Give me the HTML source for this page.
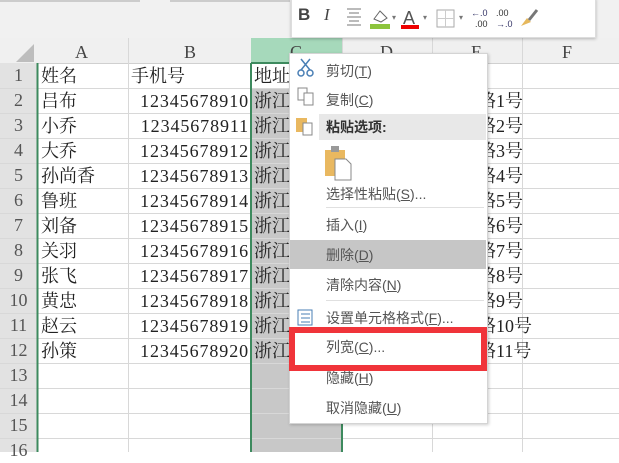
<!DOCTYPE html>
<html><head><meta charset="utf-8"><style>
body{margin:0;width:619px;height:452px;overflow:hidden;background:#fff;position:relative;font-family:"Liberation Serif","Noto Serif CJK SC",serif;}
.a{position:absolute;}
.cell{position:absolute;font-size:18px;line-height:25px;color:#222;white-space:nowrap;}
.mi{position:absolute;left:326px;font-family:"Liberation Sans","Noto Sans CJK SC",sans-serif;font-size:14px;color:#555;line-height:20px;}
</style></head><body>
<div class="a" style="left:0;top:0;width:619px;height:38px;background:#f1f1f1"></div>
<div class="a" style="left:0;top:0;width:140px;height:2px;background:#ccc"></div>
<div class="a" style="left:170px;top:0;width:120px;height:2px;background:#ccc"></div>
<div class="a" style="left:0;top:38px;width:619px;height:25px;background:#f0f0f0;border-bottom:1px solid #d0d0d0"></div>
<div class="a" style="left:251px;top:38px;width:91px;height:25px;background:#a6d9bb"></div>
<svg class="a" style="left:14px;top:44px" width="20" height="18"><polygon points="20,0 20,18 2,18" fill="#bdbdbd"/></svg>
<div class="cell" style="left:75px;top:40px;color:#444">A</div>
<div class="cell" style="left:184px;top:40px;color:#444">B</div>
<div class="cell" style="left:290px;top:40px;color:#444">C</div>
<div class="cell" style="left:380px;top:40px;color:#444">D</div>
<div class="cell" style="left:471px;top:40px;color:#444">E</div>
<div class="cell" style="left:562px;top:40px;color:#444">F</div>
<div class="a" style="left:0;top:63px;width:37px;height:389px;background:#e2e2e2"></div>
<div class="a" style="left:251px;top:88px;width:91px;height:364px;background:#c8c8c8"></div>
<svg class="a" style="left:0;top:0" width="619" height="452">
<g stroke="#d8d8d8" stroke-width="1">
<line x1="128.5" y1="38" x2="128.5" y2="452"/><line x1="342.5" y1="38" x2="342.5" y2="452"/><line x1="432.5" y1="38" x2="432.5" y2="452"/><line x1="522.5" y1="38" x2="522.5" y2="452"/>
<line x1="0" y1="88.5" x2="619" y2="88.5"/><line x1="0" y1="113.5" x2="619" y2="113.5"/><line x1="0" y1="138.5" x2="619" y2="138.5"/><line x1="0" y1="163.5" x2="619" y2="163.5"/><line x1="0" y1="188.5" x2="619" y2="188.5"/><line x1="0" y1="213.5" x2="619" y2="213.5"/><line x1="0" y1="238.5" x2="619" y2="238.5"/><line x1="0" y1="263.5" x2="619" y2="263.5"/><line x1="0" y1="288.5" x2="619" y2="288.5"/><line x1="0" y1="313.5" x2="619" y2="313.5"/><line x1="0" y1="338.5" x2="619" y2="338.5"/><line x1="0" y1="363.5" x2="619" y2="363.5"/><line x1="0" y1="388.5" x2="619" y2="388.5"/><line x1="0" y1="413.5" x2="619" y2="413.5"/><line x1="0" y1="438.5" x2="619" y2="438.5"/>
</g>
<line x1="37.5" y1="63" x2="37.5" y2="452" stroke="#3d8a5e" stroke-width="2"/>
<line x1="251" y1="63" x2="251" y2="452" stroke="#3d8a5e" stroke-width="2"/>
<line x1="342" y1="63" x2="342" y2="452" stroke="#3d8a5e" stroke-width="2"/>
<line x1="251" y1="63" x2="342" y2="63" stroke="#3d8a5e" stroke-width="2"/>
</svg>
<div class="a" style="left:0;top:63px;width:37px;font-size:18px;line-height:25px;color:#555;text-align:center;font-family:'Liberation Serif',serif">1<br>2<br>3<br>4<br>5<br>6<br>7<br>8<br>9<br>10<br>11<br>12<br>13<br>14<br>15<br>16</div>
<div class="cell" style="left:41px;top:64px;line-height:25px">姓名<br>吕布<br>小乔<br>大乔<br>孙尚香<br>鲁班<br>刘备<br>关羽<br>张飞<br>黄忠<br>赵云<br>孙策</div>
<div class="cell" style="left:131px;top:64px">手机号</div>
<div class="cell" style="left:128px;width:121px;top:89px;text-align:right;letter-spacing:0.9px">12345678910<br>12345678911<br>12345678912<br>12345678913<br>12345678914<br>12345678915<br>12345678916<br>12345678917<br>12345678918<br>12345678919<br>12345678920</div>
<div class="cell" style="left:254px;top:64px">地址<br>浙江<br>浙江<br>浙江<br>浙江<br>浙江<br>浙江<br>浙江<br>浙江<br>浙江<br>浙江<br>浙江</div>
<div class="cell" style="left:478px;top:89px">路1号<br>路2号<br>路3号<br>路4号<br>路5号<br>路6号<br>路7号<br>路8号<br>路9号<br>路10号<br>路11号</div>
<div class="a" style="left:291px;top:-2px;width:303px;height:38px;background:#fff;border:1px solid #ddd;box-shadow:0 1px 3px rgba(0,0,0,.25)"></div>
<div class="a" style="left:298px;top:5px;font:bold 17px 'Liberation Sans',sans-serif;color:#444">B</div>
<div class="a" style="left:324px;top:5px;font:italic 17px 'Liberation Serif',serif;color:#444">I</div>
<svg class="a" style="left:345px;top:6px" width="250" height="26">
<g stroke="#777"><line x1="2" y1="3" x2="16" y2="3"/><line x1="4" y1="7" x2="14" y2="7"/><line x1="2" y1="11" x2="16" y2="11"/><line x1="4" y1="15" x2="14" y2="15"/><line x1="2" y1="19" x2="16" y2="19"/></g>
<rect x="25" y="18" width="20" height="5" fill="#8cc43c"/><path d="M29 13 L35 5 L42 12 L36 16 Z" fill="none" stroke="#666"/>
<text x="47" y="14" font-size="8" fill="#777">▾</text>
<text x="58" y="18" font-size="18" font-family="Liberation Sans" fill="#555">A</text><rect x="56" y="19" width="18" height="4" fill="#e00"/>
<text x="78" y="14" font-size="8" fill="#777">▾</text>
<rect x="92" y="4" width="17" height="17" fill="none" stroke="#aaa"/><line x1="100.5" y1="4" x2="100.5" y2="21" stroke="#ccc"/><line x1="92" y1="12.5" x2="109" y2="12.5" stroke="#ccc"/>
<text x="114" y="14" font-size="8" fill="#777">▾</text>
<text x="126" y="10" font-size="9" font-family="Liberation Sans" fill="#336">←.0</text><text x="130" y="21" font-size="9" font-family="Liberation Sans" fill="#333">.00</text>
<text x="151" y="10" font-size="9" font-family="Liberation Sans" fill="#333">.00</text><text x="151" y="21" font-size="9" font-family="Liberation Sans" fill="#336">→.0</text>
<path d="M176 20 L182 12 L186 16 Z" fill="#e6b85c"/><line x1="184" y1="14" x2="192" y2="4" stroke="#777" stroke-width="3"/>
</svg>
<div class="a" style="left:289px;top:53px;width:197px;height:369px;background:#fff;border:1px solid #d4d4d4;box-shadow:1px 1px 3px rgba(0,0,0,.2)"></div>
<div class="a" style="left:319px;top:114px;width:167px;height:26px;background:#e8e8e8"></div>
<div class="a" style="left:290px;top:240px;width:196px;height:29px;background:#c6c6c6"></div>
<div class="a" style="left:326px;top:207px;width:158px;height:1px;background:#e0e0e0"></div>
<div class="a" style="left:326px;top:300px;width:158px;height:1px;background:#e0e0e0"></div>
<svg class="a" style="left:295px;top:58px" width="30" height="300">
<g fill="none" stroke="#4a7fb5" stroke-width="1.5"><line x1="6" y1="1" x2="15" y2="12"/><line x1="15" y1="1" x2="6" y2="12"/><circle cx="6" cy="15" r="3"/><circle cx="15" cy="15" r="3"/></g>
<g fill="#fff" stroke="#888"><rect x="3" y="30" width="9" height="12"/><rect x="9" y="35" width="9" height="12"/></g>
<rect x="1" y="60" width="11" height="14" fill="#e9b860"/><rect x="8" y="65" width="9" height="12" fill="#fff" stroke="#888"/>
<g><rect x="3" y="252" width="14" height="15" fill="#fff" stroke="#4a7fb5"/><line x1="6" y1="256" x2="15" y2="256" stroke="#4a7fb5"/><line x1="6" y1="260" x2="15" y2="260" stroke="#4a7fb5"/><line x1="6" y1="264" x2="15" y2="264" stroke="#4a7fb5"/></g>
</svg>
<svg class="a" style="left:325px;top:146px" width="30" height="36"><rect x="0" y="4" width="20" height="26" fill="#e9b860"/><rect x="6" y="0" width="8" height="6" fill="#999"/><path d="M10 13 H21 L26 18 V34 H10 Z" fill="#fff" stroke="#888"/></svg>
<div class="mi" style="top:61px">剪切(<u>T</u>)</div>
<div class="mi" style="top:90px">复制(<u>C</u>)</div>
<div class="mi" style="top:117px;font-weight:bold;color:#333">粘贴选项:</div>
<div class="mi" style="top:184px">选择性粘贴(<u>S</u>)...</div>
<div class="mi" style="top:215px">插入(<u>I</u>)</div>
<div class="mi" style="top:245px">删除(<u>D</u>)</div>
<div class="mi" style="top:275px">清除内容(<u>N</u>)</div>
<div class="mi" style="top:308px">设置单元格格式(<u>F</u>)...</div>
<div class="mi" style="top:337px">列宽(<u>C</u>)...</div>
<div class="mi" style="top:368px">隐藏(<u>H</u>)</div>
<div class="mi" style="top:398px">取消隐藏(<u>U</u>)</div>
<div class="a" style="left:289px;top:327px;width:186px;height:32px;border:6px solid #f0343a"></div>
</body></html>
